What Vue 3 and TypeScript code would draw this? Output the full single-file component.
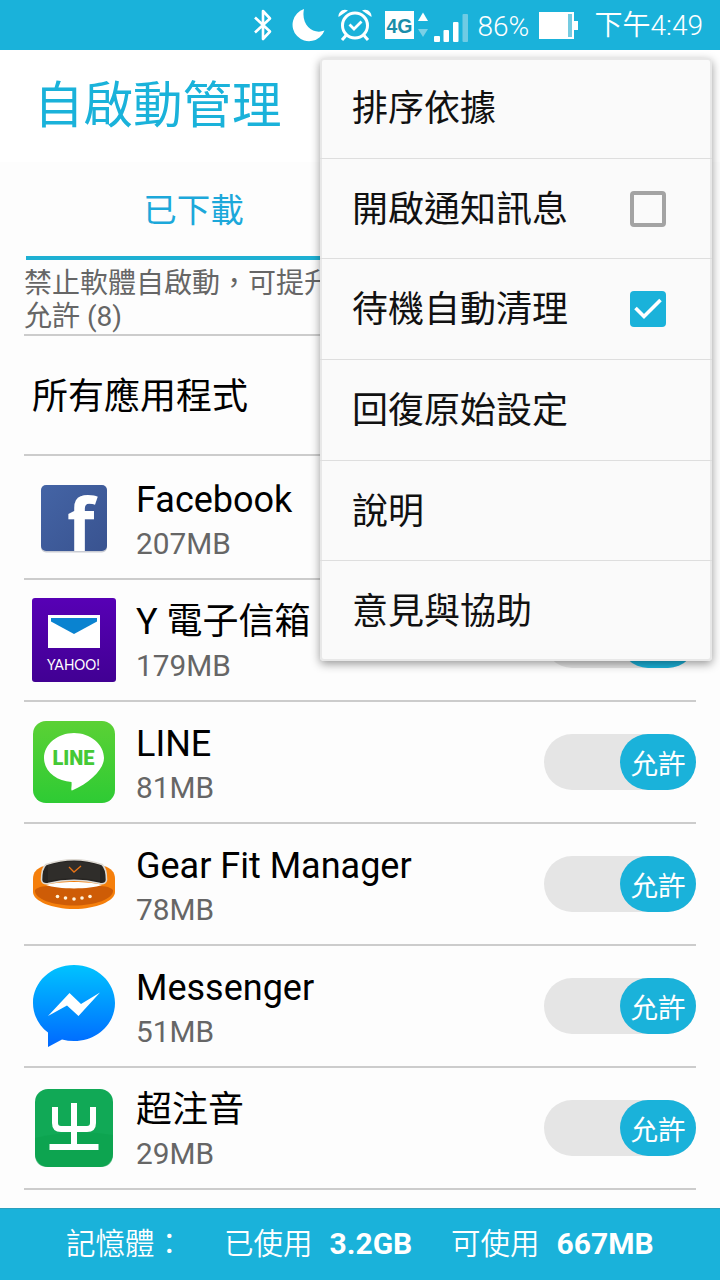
<script setup lang="ts">
import { ref } from 'vue';

interface AppItem {
  id: string;
  name: string;
  size: string;
  allowed: boolean;
}

interface MenuItem {
  label: string;
  checked?: boolean;
}

const apps = ref<AppItem[]>([
  { id: 'facebook', name: 'Facebook', size: '207MB', allowed: true },
  { id: 'yahoo', name: 'Y 電子信箱', size: '179MB', allowed: true },
  { id: 'line', name: 'LINE', size: '81MB', allowed: true },
  { id: 'gear', name: 'Gear Fit Manager', size: '78MB', allowed: true },
  { id: 'messenger', name: 'Messenger', size: '51MB', allowed: true },
  { id: 'zhuyin', name: '超注音', size: '29MB', allowed: true }
]);

const menu = ref<MenuItem[]>([
  { label: '排序依據' },
  { label: '開啟通知訊息', checked: false },
  { label: '待機自動清理', checked: true },
  { label: '回復原始設定' },
  { label: '說明' },
  { label: '意見與協助' }
]);

const toggleMenu = (item: MenuItem) => {
  if (item.checked !== undefined) {
    item.checked = !item.checked;
  }
};
</script>

<template>
  <div class="screen">
    <header class="status">
      <svg class="status__bt" width="20" height="34" viewBox="0 0 20 34">
        <path d="M2 9.5 17 23.5 10 31V3l7 7.5L2 24.5" fill="none" stroke="#fff" stroke-width="2.6" stroke-linejoin="round" />
      </svg>
      <svg class="status__moon" width="34" height="34" viewBox="0 0 34 34">
        <path d="M12 1A16.500 16.500 0 1 0 32.500 22.500C22 27 8.500 18 12 1Z" fill="#fff" />
      </svg>
      <svg class="status__alarm" width="34" height="34" viewBox="0 0 34 34">
        <g fill="none" stroke="#fff">
          <circle cx="17" cy="17.500" r="12.500" stroke-width="3" />
          <path d="M11.500 16.500 16 21 23.500 13.500" stroke-width="2.800" />
          <path d="M8 27.500 4 32M26 27.500 30 32" stroke-width="3" />
        </g>
        <path d="M.5 9C0 4 5 0 10 2.500ZM33.500 9C34 4 29 0 24 2.500Z" fill="#fff" />
      </svg>
      <svg class="status__net" width="84" height="34" viewBox="0 0 84 34">
        <rect x="0" y="3" width="29" height="28" fill="#fff" />
        <text x="14.500" y="24.500" text-anchor="middle" textLength="26" lengthAdjust="spacingAndGlyphs" class="status__4g">4G</text>
        <path d="M33 13 38 4.500 43 13Z" fill="#fff" />
        <path d="M33 21 38 29 43 21Z" fill="#7ad0e6" />
        <g fill="#fff">
          <rect x="49" y="28" width="6" height="6" rx="1" />
          <rect x="58.500" y="22" width="5.500" height="12" rx="1" />
          <rect x="68" y="14" width="5.500" height="20" rx="1" />
        </g>
        <rect x="77.500" y="6" width="5.500" height="28" rx="1" fill="#6fcbe4" />
      </svg>
      <span class="status__pct">86%</span>
      <svg class="status__battery" width="39" height="27" viewBox="0 0 39 27">
        <path d="M0 0H35V9H39V18H35V27H0Z" fill="#fff" />
        <rect x="29" y="2" width="4" height="23" fill="#75cbe1" />
      </svg>
      <span class="status__time">下午4:49</span>
    </header>

    <h1 class="title">自啟動管理</h1>

    <main class="content">
      <nav class="tabs">
        <button type="button" class="tabs__item tabs__item--active">已下載</button>
      </nav>
      <div class="summary">
        <p>禁止軟體自啟動，可提升</p>
        <p>允許 (8)</p>
      </div>
      <div class="row row--all">所有應用程式</div>

      <div v-for="app in apps" :key="app.id" class="row">
        <svg class="row__icon" width="84" height="84" viewBox="0 0 84 84" aria-hidden="true">
          <template v-if="app.id === 'facebook'">
            <defs>
              <linearGradient id="fb" x1="0" y1="0" x2="1" y2="1">
                <stop offset="0" stop-color="#4464a5" />
                <stop offset="1" stop-color="#395390" />
              </linearGradient>
            </defs>
            <rect x="9" y="10.500" width="66" height="66" rx="5" fill="#c9ccd4" />
            <rect x="9" y="9" width="66" height="66" rx="5" fill="url(#fb)" />
            <text x="35" y="75" textLength="27.500" lengthAdjust="spacingAndGlyphs" class="logo-f">f</text>
          </template>
          <template v-else-if="app.id === 'yahoo'">
            <defs>
              <linearGradient id="yh" x1="0" y1="0" x2="0" y2="1">
                <stop offset="0" stop-color="#5700b5" />
                <stop offset="1" stop-color="#410093" />
              </linearGradient>
            </defs>
            <rect width="84" height="84" rx="3" fill="url(#yh)" />
            <rect x="16" y="17" width="52" height="33" fill="#fff" />
            <path d="M19 20H65V23.500L42 36 19 23.500Z" fill="#0a83d0" />
            <text x="15" y="72" textLength="53" lengthAdjust="spacingAndGlyphs" class="logo-yahoo">YAHOO!</text>
          </template>
          <template v-else-if="app.id === 'line'">
            <defs>
              <linearGradient id="ln" x1="0" y1="0" x2="0" y2="1">
                <stop offset="0" stop-color="#5bd135" />
                <stop offset="1" stop-color="#2ecb34" />
              </linearGradient>
            </defs>
            <rect x="1" y="1" width="82" height="82" rx="13" fill="url(#ln)" />
            <path d="M42 13C58 13 72 24 72 38C72 49 58 63 40 70.500C38.500 70.500 40 66 39.500 62C24 61 12 51 12 38C12 24 26 13 42 13Z" fill="#fff" />
            <text x="20.500" y="45" textLength="42" class="logo-line">LINE</text>
          </template>
          <template v-else-if="app.id === 'gear'">
            <path d="M1 37C1 30 5 26 12 24H72C79 26 83 30 83 37V50C83 59 64 67 42 67S1 59 1 50Z" fill="#f57f0b" />
            <path d="M3 48C8 42 25 44 42 44S76 42 81 48C82 57 63 63.500 42 63.500S2 57 3 48Z" fill="#ce5c06" />
            <path d="M14 43C26 39 58 39 70 43C58 47.500 26 47.500 14 43Z" fill="#fff" />
            <path d="M14 22.500Q42 13 70 22.500Q74.500 26 74.500 38Q74 42.500 68 41.500Q42 35 16 41.500Q10 42.500 9.500 38Q9.500 26 14 22.500Z" fill="#272523" stroke="#ddd9d2" stroke-width="1.600" />
            <path d="M16 23Q42 16 68 23V39Q42 33 16 39Z" fill="#36332f" opacity=".6" />
            <path d="M37 25 42 30 49 24" fill="none" stroke="#e87316" stroke-width="1.300" />
            <g fill="#fff4dc">
              <circle cx="25.500" cy="54.500" r="1.800" />
              <circle cx="33.500" cy="56" r="1.800" />
              <circle cx="42" cy="57" r="1.800" />
              <circle cx="50" cy="56" r="1.800" />
              <circle cx="58" cy="54.500" r="1.800" />
            </g>
          </template>
          <template v-else-if="app.id === 'messenger'">
            <defs>
              <linearGradient id="ms" x1="0" y1="0" x2="0" y2="1">
                <stop offset="0" stop-color="#00c3ff" />
                <stop offset="1" stop-color="#0068ff" />
              </linearGradient>
            </defs>
            <path d="M42 1C65 1 83 18 83 39S65 77 42 77Q36 77 30 75.500L16 83V68.500C7 62 1 51 1 39C1 18 19 1 42 1Z" fill="url(#ms)" />
            <path d="M16 52 37.500 29 49 40 68 28.500 46.500 52 35 41.500Z" fill="#fff" />
          </template>
          <template v-else>
            <rect x="3" y="3" width="78" height="78" rx="13" fill="#11a956" />
            <path d="M3 52Q42 43 81 49V68Q81 81 68 81H16Q3 81 3 68Z" fill="#0ca14d" opacity=".6" />
            <g fill="none" stroke="#fff" stroke-width="6">
              <path d="M23 21V37Q23 43 29 43H55Q61 43 61 37V21" />
              <path d="M42 17V60" />
              <path d="M17.500 61H66.500" />
            </g>
          </template>
        </svg>
        <div class="row__text">
          <span class="row__name">{{ app.name }}</span>
          <span class="row__size">{{ app.size }}</span>
        </div>
        <button
          type="button"
          role="switch"
          class="switch"
          :class="{ 'switch--on': app.allowed }"
          :aria-checked="app.allowed"
          @click="app.allowed = !app.allowed"
        >
          <span class="switch__knob">{{ app.allowed ? '允許' : '禁止' }}</span>
        </button>
      </div>
    </main>

    <footer class="memory">
      <span class="memory__title">記憶體：</span>
      <span class="memory__used">已使用<b>3.2GB</b></span>
      <span>可使用<b>667MB</b></span>
    </footer>

    <ul class="menu">
      <li v-for="item in menu" :key="item.label" class="menu__item" @click="toggleMenu(item)">
        <span class="menu__label">{{ item.label }}</span>
        <span v-if="item.checked !== undefined" class="checkbox" :class="{ 'checkbox--on': item.checked }">
          <svg v-if="item.checked" width="36" height="36" viewBox="0 0 36 36">
            <path d="M5.500 17 14 25.500 30.500 9" fill="none" stroke="#fff" stroke-width="3.600" />
          </svg>
        </span>
      </li>
    </ul>
  </div>
</template>

<style>
body {
  margin: 0;
}
</style>

<style scoped>
.screen {
  position: relative;
  display: flex;
  flex-direction: column;
  width: 720px;
  height: 1280px;
  overflow: hidden;
  background: #fdfdfd;
  color: #000;
  font-family: Roboto, 'Noto Sans CJK TC', sans-serif;
}

button {
  padding: 0;
  border: 0;
  font-family: inherit;
}

.status {
  display: flex;
  align-items: center;
  justify-content: flex-end;
  box-sizing: border-box;
  height: 50px;
  flex: none;
  padding-right: 17px;
  background: #1ab2da;
  color: #fff;
  white-space: nowrap;
}

.status__moon {
  margin-left: 19px;
}

.status__alarm {
  margin-left: 12px;
}

.status__net {
  margin-left: 13px;
}

.status__4g {
  fill: #1a8daa;
  font: bold 21px 'Liberation Sans', sans-serif;
}

.status__pct {
  width: 52px;
  margin-left: 9px;
  font-size: 28px;
  font-weight: 350;
  line-height: 46px;
  padding-top: 4px;
}

.status__battery {
  margin-left: 9px;
}

.status__time {
  margin-left: 17px;
  font-size: 28px;
  font-weight: 350;
  line-height: 50px;
  padding-top: 1px;
}

.title {
  flex: none;
  height: 112px;
  margin: 0;
  padding-left: 34px;
  background: #fff;
  color: #1ab2da;
  font-size: 49.5px;
  font-weight: 400;
  line-height: 112px;
}

.content {
  flex: 1;
  padding: 0 24px;
}

.tabs {
  display: flex;
  height: 98px;
  padding-left: 2px;
}

.tabs__item {
  width: 335px;
  padding-top: 4px;
  background: none;
  font-size: 33.5px;
  line-height: 90px;
}

.tabs__item--active {
  border-bottom: 4px solid #1eb0d3;
  color: #1ca8da;
}

.summary {
  height: 74px;
  border-bottom: 2px solid #ccc;
  color: #666;
  font-size: 28px;
  line-height: 33px;
  white-space: nowrap;
}

.summary p {
  margin: 0;
}

.summary p:first-child {
  padding-top: 7px;
}

.row {
  display: flex;
  align-items: center;
  box-sizing: border-box;
  height: 122px;
  padding-left: 8px;
  border-bottom: 2px solid #ccc;
}

.row--all {
  height: 120px;
  margin-bottom: 2px;
  padding-bottom: 4px;
  font-size: 36px;
}

.row__icon {
  flex: none;
  overflow: visible;
}

.row__text {
  display: flex;
  flex: 1;
  flex-direction: column;
  padding-top: 8px;
  margin-left: 20px;
  white-space: nowrap;
}

.row__name {
  height: 44px;
  font-size: 36px;
  line-height: 44px;
}

.row__size {
  height: 44px;
  color: #666;
  font-size: 29.8px;
  line-height: 44px;
}

.switch {
  display: flex;
  width: 152px;
  height: 56px;
  border-radius: 28px;
  background: #e5e5e5;
  cursor: pointer;
}

.switch--on {
  justify-content: flex-end;
}

.switch__knob {
  width: 76px;
  height: 56px;
  border-radius: 28px;
  background: #999;
  color: #fff;
  font-size: 27.5px;
  line-height: 61px;
}

.switch--on .switch__knob {
  background: #1ab2da;
}

.memory {
  display: flex;
  flex: none;
  box-sizing: border-box;
  height: 72px;
  padding-left: 66px;
  border-top: 1px solid #2b9fbd;
  background: #1ab2da;
  color: #fff;
  font-size: 29.5px;
  font-weight: 350;
  line-height: 70px;
  white-space: nowrap;
}

.memory__title {
  width: 158px;
}

.memory__used {
  width: 227px;
}

.memory b {
  margin-left: 17px;
  font-size: 30px;
  font-weight: 700;
}

/* the frame is an inset shadow so that the dividers run to the outer edge */
.menu {
  position: absolute;
  top: 58px;
  left: 320px;
  width: 392px;
  height: 603px;
  display: flex;
  flex-direction: column;
  margin: 0;
  padding: 0;
  border-radius: 4px;
  background: #fafafa;
  box-shadow:
    inset 0 0 0 2px #e8e8e8,
    0 3px 10px rgba(0, 0, 0, 0.4);
  list-style: none;
}

.menu__item {
  display: flex;
  flex: 1;
  align-items: center;
  justify-content: space-between;
  padding: 0 46px 0 32px;
  color: #111;
  font-size: 36px;
  line-height: 1;
  cursor: pointer;
}

.menu__item + .menu__item {
  border-top: 1px solid #dedede;
}

.menu__label {
  padding-top: 2px;
}

.checkbox {
  box-sizing: border-box;
  width: 36px;
  height: 36px;
  border: 4px solid #a3a3a3;
  border-radius: 4px;
}

.checkbox--on {
  border: 0;
  background: #1ab2da;
}

.logo-f {
  fill: #fff;
  font: bold 73px 'Open Sans', sans-serif;
}

.logo-yahoo {
  fill: #fff;
  font: 15px Lato, sans-serif;
}

.logo-line {
  fill: #45c936;
  font: 900 20px Roboto, sans-serif;
}
</style>
